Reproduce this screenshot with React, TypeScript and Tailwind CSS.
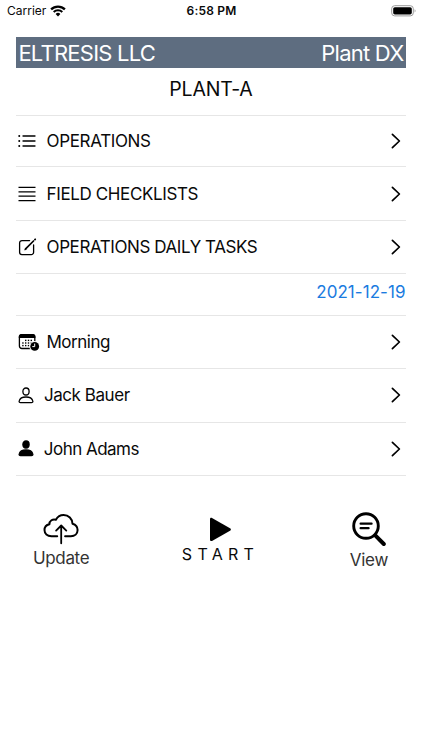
import type { ReactNode } from 'react';

function WifiIcon() {
  return (
    <svg width="16" height="12" viewBox="0 0 16 12" fill="none">
      <path d="M1.1 4.4a9.8 9.8 0 0 1 13.8 0" stroke="black" strokeWidth="2.3" />
      <path d="M3.7 7a6.1 6.1 0 0 1 8.6 0" stroke="black" strokeWidth="2" />
      <path d="M8 11.4 5.6 9a3.4 3.4 0 0 1 4.8 0z" fill="black" />
    </svg>
  );
}

function BatteryIcon() {
  return (
    <svg width="26" height="12" viewBox="0 0 26 12" fill="none">
      <rect x="0.7" y="0.7" width="21.6" height="10.2" rx="3" stroke="#9b9b9b" />
      <rect x="2.2" y="2.2" width="18.6" height="7.2" rx="1.6" fill="black" />
      <path d="M23.6 4.2c1.3.5 1.3 2.7 0 3.2z" fill="#9b9b9b" />
    </svg>
  );
}

function BulletListIcon() {
  return (
    <svg width="18" height="14" viewBox="0 0 18 14" fill="none" stroke="black" strokeWidth="1.3" strokeLinecap="round">
      <path d="M5 2h12M5 7h12M5 12h12" />
      <path d="M1.2 2h.1M1.2 7h.1M1.2 12h.1" strokeWidth="1.9" />
    </svg>
  );
}

function LinesIcon() {
  return (
    <svg width="18" height="16" viewBox="0 0 18 16" fill="none" stroke="black" strokeWidth="1.3">
      <path d="M.5 1.4h17M.5 5.8h17M.5 10.2h17M.5 14.6h17" />
    </svg>
  );
}

function ComposeIcon() {
  return (
    <svg width="19" height="18" viewBox="0 0 19 18" fill="none" stroke="black" strokeLinecap="round">
      <path d="M11.6 2.6H4A2.4 2.4 0 0 0 1.6 5v9.2A2.4 2.4 0 0 0 4 16.6h9.2a2.4 2.4 0 0 0 2.4-2.4V7" strokeWidth="1.3" />
      <path d="m7.6 10.9 7.9-7.9" strokeWidth="1.7" />
      <path d="m16.9 1.6.3-.3" strokeWidth="1.8" />
      <path d="m6.8 11.7.7-1.3.6.6z" fill="black" strokeWidth=".7" />
    </svg>
  );
}

function CalendarClockIcon() {
  return (
    <svg width="22" height="19" viewBox="0 0 22 19" fill="none">
      <rect x="1.4" y="1.7" width="15.4" height="13.8" rx="2.4" stroke="black" strokeWidth="1.3" />
      <path d="M.8 5V3.6A2.6 2.6 0 0 1 3.4 1h11.4a2.6 2.6 0 0 1 2.6 2.6V5z" fill="black" />
      <g fill="black">
        <rect x="7" y="6.7" width="1.4" height="1.4" />
        <rect x="9.8" y="6.7" width="1.4" height="1.4" />
        <rect x="12.6" y="6.7" width="1.4" height="1.4" />
        <rect x="4.2" y="9.3" width="1.4" height="1.4" />
        <rect x="7" y="9.3" width="1.4" height="1.4" />
        <rect x="9.8" y="9.3" width="1.4" height="1.4" />
        <rect x="12.6" y="9.3" width="1.4" height="1.4" />
        <rect x="4.2" y="11.9" width="1.4" height="1.4" />
        <rect x="7" y="11.9" width="1.4" height="1.4" />
        <rect x="9.8" y="11.9" width="1.4" height="1.4" />
      </g>
      <circle cx="16.7" cy="13.4" r="5.3" fill="white" />
      <circle cx="16.7" cy="13.4" r="4.4" fill="black" />
      <path d="M16.7 10.6v3h-2.4" stroke="white" strokeWidth="1" />
    </svg>
  );
}

function PersonIcon({ filled }: { filled?: boolean }) {
  return (
    <svg width="16" height="17" viewBox="0 0 16 17" fill={filled ? 'black' : 'none'} stroke="black" strokeWidth="1.3">
      <ellipse cx="8" cy="4.5" rx="3.1" ry="3.5" />
      <path d="M2.6 15.6h10.8c1.2 0 1.7-.7 1.4-1.7-.6-2.2-3.3-3.9-6.8-3.9s-6.2 1.7-6.8 3.9c-.3 1 .2 1.7 1.4 1.7z" />
    </svg>
  );
}

function ChevronIcon() {
  return (
    <svg width="10" height="16" viewBox="0 0 10 16" fill="none" stroke="black" strokeWidth="1.7" strokeLinecap="round" strokeLinejoin="round">
      <path d="m1.4 1.3 7 6.7-7 6.7" />
    </svg>
  );
}

function CloudUploadIcon() {
  return (
    <svg width="36" height="32" viewBox="0 0 36 32" fill="none" stroke="black" strokeWidth="2" strokeLinecap="round" strokeLinejoin="round">
      <path d="M14.2 23.2H8.4C4.3 23.2 1.5 20.6 1.5 17.1c0-3 2-5.3 4.9-5.9C6.4 7.6 9.7 5.7 12.9 6.7 14.5 3.8 17.3 2 20.6 2c5 0 8.7 3.8 8.9 8.7 3.2.9 5.1 3.3 5.1 6.3 0 3.7-2.9 6.2-6.7 6.2h-5.8" />
      <path d="M18.2 30.3V12.7M13.1 17.6l5.1-5.1 5.1 5.1" strokeWidth="1.8" />
    </svg>
  );
}

function PlayIcon() {
  return (
    <svg width="23" height="25" viewBox="0 0 23 25" fill="black">
      <path d="M1 2.2C1 1 2 .5 3 1l18 10.2c1.2.7 1.2 1.800 0 2.500L3 23.900c-1 .5-2 0-2-1.200z" />
    </svg>
  );
}

function SearchTextIcon() {
  return (
    <svg width="34" height="35" viewBox="0 0 34 35" fill="none" stroke="black" strokeLinecap="round">
      <circle cx="14" cy="14" r="12.3" strokeWidth="2.9" />
      <path d="m23.5 23.7 8.3 8.3" strokeWidth="4" />
      <path d="M8.600 11.700h11M8.600 16.200h8" strokeWidth="2.2" />
    </svg>
  );
}

type RowProps = {
  icon: ReactNode;
  label: string;
  labelClass: string;
  className?: string;
};

function Row({ icon, label, labelClass, className = 'h-[53.2px]' }: RowProps) {
  return (
    <button type="button" className={`flex w-full items-center border-b border-[#e6e6e6] pl-[2px] text-left ${className}`}>
      <span className="shrink-0">{icon}</span>
      <span className={`flex-1 whitespace-nowrap text-[17px] leading-5 ${labelClass}`}>{label}</span>
      <span className="mr-[5px] shrink-0">
        <ChevronIcon />
      </span>
    </button>
  );
}

export default function App() {
  return (
    <div className="h-[750px] w-[422px] overflow-hidden bg-white font-[Inter,'Liberation_Sans',sans-serif] text-[#0a0a0a]">
      {/* Status bar */}
      <div className="grid h-[22px] grid-cols-3 items-center pr-[6px] pl-[7px]">
        <div className="flex items-center gap-[4px]">
          <span className="text-[12px]">Carrier</span>
          <WifiIcon />
        </div>
        <span className="text-center text-[12px] font-semibold tracking-[0.2px]">6:58 PM</span>
        <div className="-mr-px flex justify-end">
          <BatteryIcon />
        </div>
      </div>

      <main className="mt-[15px] mr-[16.5px] ml-[16.4px]">
        <header className="flex h-[31px] items-center justify-between bg-[#5e6d80] pr-[2px] pl-[2px] text-[22px] leading-none text-white">
          <span className="tracking-[-0.75px]">ELTRESIS LLC</span>
          <span className="tracking-[-0.75px]">Plant DX</span>
        </header>

        <h1 className="flex h-[47.5px] items-center justify-center border-b border-[#e6e6e6] pb-[4px] text-[19.5px] tracking-[-0.2px]">
          PLANT-A
        </h1>

        <Row className="h-[51.5px]" icon={<BulletListIcon />} label="OPERATIONS" labelClass="ml-[10.2px] tracking-[-0.35px]" />
        <Row className="h-[54px]" icon={<LinesIcon />} label="FIELD CHECKLISTS" labelClass="ml-[10.2px] tracking-[-0.38px]" />
        <Row icon={<ComposeIcon />} label="OPERATIONS DAILY TASKS" labelClass="ml-[9.2px] tracking-[-0.42px]" />

        <div className="flex h-[42px] items-center justify-end border-b border-[#e6e6e6] pb-[3px]">
          <span className="text-[17px] tracking-[0.05px] text-[#1a7be0]">2021-12-19</span>
        </div>

        <Row icon={<CalendarClockIcon />} label="Morning" labelClass="ml-[6px] tracking-[-0.45px]" />
        <Row icon={<PersonIcon />} label="Jack Bauer" labelClass="ml-[9.6px] tracking-[-0.45px]" />
        <Row icon={<PersonIcon filled />} label="John Adams" labelClass="ml-[9.4px] tracking-[-0.52px]" />
      </main>

      {/* Bottom actions */}
      <div className="mt-[36px] flex items-start justify-between pr-[34px] pl-[33px]">
        <button type="button" className="flex flex-col items-center pt-px text-[#333]">
          <CloudUploadIcon />
          <span className="mt-[3px] text-[17px] leading-5 tracking-[-0.35px]">Update</span>
        </button>
        <button type="button" className="flex flex-col items-center pt-[5px] pl-[2px]">
          <PlayIcon />
          <span className="mt-[2px] text-[16px] leading-5 tracking-[5.3px]">START</span>
        </button>
        <button type="button" className="flex flex-col items-center text-[#333]">
          <SearchTextIcon />
          <span className="mt-[3px] text-[17px] leading-5 tracking-[-0.3px]">View</span>
        </button>
      </div>
    </div>
  );
}
